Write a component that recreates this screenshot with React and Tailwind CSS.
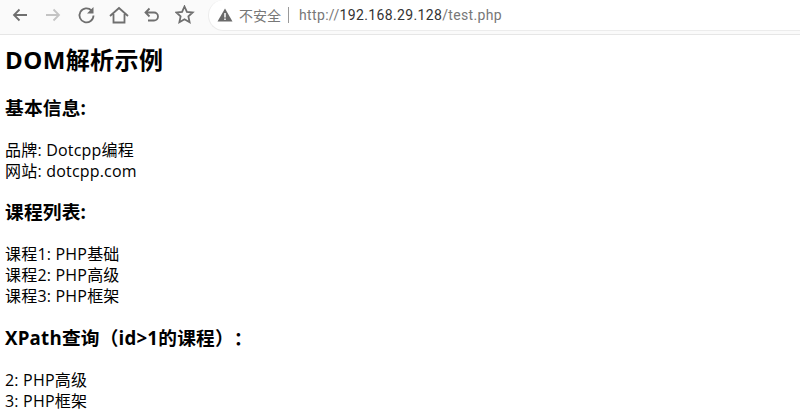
function ToolIcon({ children, className = "text-[#6f6f6f]" }) {
  return (
    <svg width="20" height="20" viewBox="0 0 20 20" fill="none" stroke="currentColor" strokeWidth="1.8" className={className}>
      {children}
    </svg>
  );
}

function Toolbar() {
  return (
    <div className="flex h-[35px] items-start border-b border-[#e6e6e6] bg-[#fafafa]">
      <div className="mt-[5px] ml-[10px] flex items-center gap-[13px]">
        <ToolIcon><path d="M17 10H4M9.500 4.500 4 10l5.500 5.500" /></ToolIcon>
        <ToolIcon className="text-[#c4c4c4]"><path d="M3 10h13M10.500 4.500 16 10l-5.500 5.500" /></ToolIcon>
        <ToolIcon><path d="M15.500 5.500a7 7 0 1 0 2 5" /><path d="M17.500 2v6.500H11z" fill="currentColor" stroke="none" /></ToolIcon>
        <ToolIcon><path d="M1 11 10 3l9 8M4.500 9v8.500h11V9" /></ToolIcon>
        <ToolIcon><path d="M7.500 3.500 3.500 7.500l4 4M3.500 7.500H12a4 4 0 0 1 0 8H6" /></ToolIcon>
        <ToolIcon><path d="m9.500 1.500 2.400 5.400 5.800.600-4.300 3.900 1.200 5.800-5.100-3-5.100 3 1.200-5.800L1.300 7.500l5.800-.600z" /></ToolIcon>
      </div>
      <div className="ml-[13px] flex h-[31px] flex-1 items-center rounded-l-full border border-r-0 border-t-0 border-[#ececec] bg-white pl-[8px] text-[14px] text-[#777]">
        <svg width="16" height="16" viewBox="0 0 16 16" className="text-[#6a6a6a]">
          <path d="M8 1.500 15.500 14.500H.500z" fill="currentColor" />
          <path d="M8 6v4.500M8 11.500v1.500" stroke="#fff" strokeWidth="1.500" />
        </svg>
        <span className="ml-[6px]">不安全</span>
        <span className="mr-[10px] ml-[7px] h-[16px] w-px bg-[#9a9a9a]" />
        <span className="font-['Roboto','Noto_Sans_CJK_SC',sans-serif] tracking-[0.35px]">
          http://<span className="text-[#333]">192.168.29.128</span>/test.php
        </span>
      </div>
    </div>
  );
}

function Lines({ items, className = "mt-[20px]" }) {
  return (
    <p className={`${className} text-[16px] leading-[21px] tracking-[0.2px] text-black`}>
      {items.map((t) => (
        <span key={t} className="block">{t}</span>
      ))}
    </p>
  );
}

function Heading({ children }) {
  return <h3 className="mt-[18px] text-[18.700px] leading-[25px] font-bold tracking-[0.2px] text-black">{children}</h3>;
}

export default function App() {
  return (
    <div className="h-[419px] w-[800px] overflow-hidden bg-white font-['Open_Sans','Noto_Sans_CJK_SC',sans-serif] [text-spacing-trim:space-all]">
      <Toolbar />
      <div className="px-[5px] pt-[8px]">
        <h2 className="text-[24px] leading-[34px] font-bold tracking-[0.4px] text-black">DOM解析示例</h2>
        <Heading>基本信息:</Heading>
        <Lines items={["品牌: Dotcpp编程", "网站: dotcpp.com"]} className="mt-[20px] mb-[-1px]" />
        <Heading>课程列表:</Heading>
        <Lines items={["课程1: PHP基础", "课程2: PHP高级", "课程3: PHP框架"]} />
        <Heading>XPath查询（id&gt;1的课程）：</Heading>
        <Lines items={["2: PHP高级", "3: PHP框架"]} />
      </div>
    </div>
  );
}
